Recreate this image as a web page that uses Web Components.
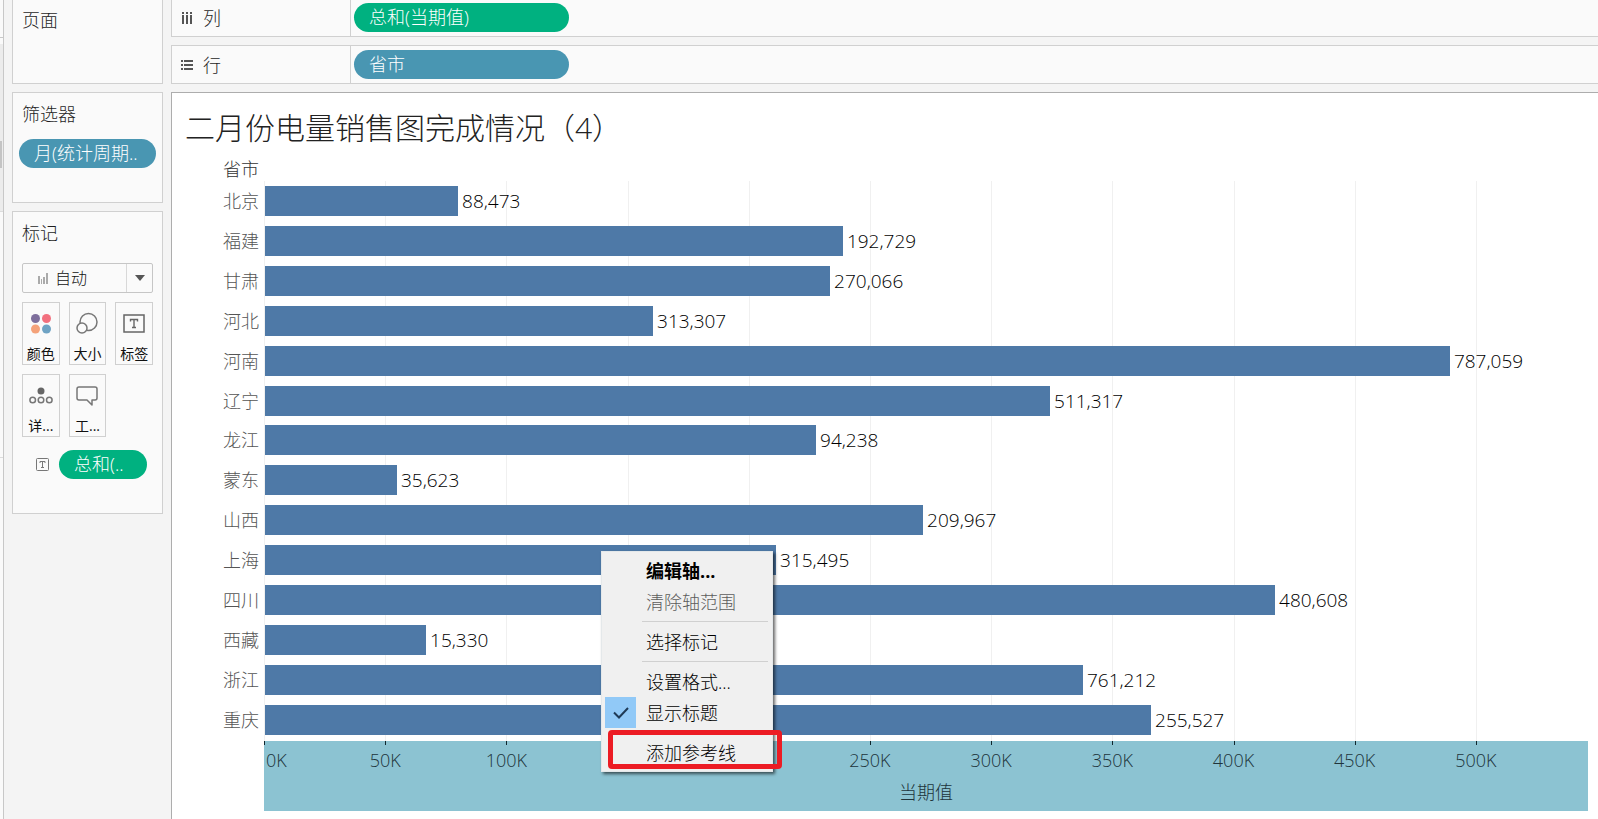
<!DOCTYPE html>
<html lang="zh-CN">
<head>
<meta charset="utf-8">
<title>二月份电量销售图完成情况</title>
<style>
  html, body { margin: 0; min-height: 100%; }
  body {
    background: #f4f4f4;
    color: #1e1e1e;
    font-family: "Open Sans", "Noto Sans CJK SC", sans-serif;
    overflow: hidden;
  }
</style>
</head>
<body>
<viz-workbook></viz-workbook>

<script>
const define = (name, html, setup) => {
  const template = document.createElement('template');
  template.innerHTML = html;
  customElements.define(name, class extends HTMLElement {
    connectedCallback() {
      if (this.shadowRoot) return;
      const root = this.attachShadow({ mode: 'open' });
      root.append(template.content.cloneNode(true));
      if (setup) setup(root, this);
    }
  });
};

/* Edge of the data pane */
define('pane-edge', `
  <style>
    :host { display: flex; flex-direction: column; width: 3px; border-right: 1px solid #c8c8c8; background: #fafafa; }
    div { flex: none; box-sizing: border-box; }
    .head { height: 38px; border-bottom: 1px solid #c8c8c8; }
    .list { height: 167px; margin-top: 6px; padding-top: 97px; background: #ececec; }
    .thumb { height: 27px; width: 2px; background: #c4c4c4; }
    .fields { height: 247px; border-top: 1px solid #dcdcdc; border-bottom: 1px solid #dcdcdc; }
  </style>
  <div class="head"></div>
  <div class="list"><div class="thumb"></div></div>
  <div class="fields"></div>
`);

/* Rounded field pill */
define('field-pill', `
  <style>
    :host { display: block; }
    button {
      display: block; width: 100%; height: 29px; box-sizing: border-box; margin: 0; padding: 0 15px 1px;
      border: 0; border-radius: 15px; background: #4996b2; color: #fff;
      font: 300 18px/26px "Open Sans", "Noto Sans CJK SC", sans-serif;
      text-align: left; white-space: nowrap;
    }
    :host([kind="measure"]) button { background: #00b180; }
  </style>
  <button type="button"><slot></slot></button>
`);

/* Titled card in the side column */
define('side-card', `
  <style>
    :host { display: block; box-sizing: border-box; border: 1px solid #d0d0d0; background: #fafafa; padding: 0 9px; }
    :host([flush]) { border-top: 0; }
    h2 { margin: 0; padding-top: 8px; font-size: 18px; line-height: 26px; font-weight: 300; }
    :host([flush]) h2 { padding-top: 7px; }
  </style>
  <h2><slot name="title"></slot></h2>
  <slot></slot>
`);

/* Rows / columns shelf */
define('field-shelf', `
  <style>
    :host { display: flex; box-sizing: border-box; border: 1px solid #d0d0d0; border-right: 0; background: #fafafa; height: 39px; }
    :host([flush]) { border-top: 0; height: 37px; }
    .name { display: flex; align-items: center; gap: 10px; box-sizing: border-box; width: 179px; padding-left: 9px;
      border-right: 1px solid #d0d0d0; font-size: 18px; line-height: 26px; font-weight: 300; }
    .fields { display: flex; align-items: flex-start; padding: 4px 0 0 3px; }
    :host([flush]) .name { padding-bottom: 1px; }
    :host([flush]) .fields { padding-top: 3px; }
    ::slotted(field-pill) { width: 215px; }
    ::slotted(svg) { display: block; }
  </style>
  <div class="name"><slot name="icon"></slot><slot name="title"></slot></div>
  <div class="fields"><slot></slot></div>
`);

/* Mark property button: icon over caption */
define('mark-button', `
  <style>
    :host { display: block; }
    button {
      display: flex; flex-direction: column; align-items: center; box-sizing: border-box; width: 100%; height: 63px;
      margin: 0; padding: 7px 0 0; border: 1px solid #d0d0d0; background: #fafafa; color: #111;
      font: 400 14px/20px "Open Sans", "Noto Sans CJK SC", sans-serif; white-space: nowrap;
    }
    .icon { height: 34px; }
  </style>
  <button type="button"><span class="icon"><slot name="icon"></slot></span><span><slot></slot></span></button>
`);

/* Mark type drop-down */
define('mark-type', `
  <style>
    :host { display: grid; grid-template-columns: minmax(0, 1fr); margin-top: 17px; }
    :host > * { grid-area: 1 / 1; }
    select {
      appearance: none; box-sizing: border-box; width: 100%; height: 30px; margin: 0 0 1px; padding: 0 32px 0 32px;
      border: 1px solid #c6c6c6; border-radius: 2px; background: #fafafa; color: #111;
      font: 300 16px/28px "Open Sans", "Noto Sans CJK SC", sans-serif;
    }
    .deco { display: flex; align-items: center; justify-content: space-between; pointer-events: none; padding-left: 16px; margin-bottom: 1px; }
    .arrow { display: flex; align-items: center; justify-content: center; align-self: stretch; width: 26px; border-left: 1px solid #d8d8d8; margin: 1px 0; }
  </style>
  <select aria-label="标记类型"><option>自动</option></select>
  <div class="deco">
    <svg width="10" height="11" viewBox="0 0 10 11" fill="#aaa"><path d="M0 3h2v8H0zM3 6h1v5H3zM5 4h2v7H5zM8 0h2v11H8z"/></svg>
    <span class="arrow"><svg width="10" height="6" viewBox="0 0 10 6"><path d="M0 0h10L5 6z" fill="#555"/></svg></span>
  </div>
`);

/* Context menu */
define('menu-item', `
  <style>
    :host { display: block; position: relative; }
    button {
      display: flex; align-items: center; box-sizing: border-box; width: 100%; height: 31px; margin: 0; padding: 0;
      border: 0; background: transparent; color: #000; text-align: left; white-space: nowrap;
      font: 300 18px/26px "Open Sans", "Noto Sans CJK SC", sans-serif;
    }
    :host([strong]) button { font-weight: 700; }
    :host([off]) button { color: #5d5d5d; }
    .check { display: flex; align-items: center; justify-content: center; width: 31px; height: 31px; margin-right: 10px; }
    .check svg { visibility: hidden; }
    :host([checked]) .check { background: #91c9f7; }
    :host([checked]) .check svg { visibility: visible; }
    :host([marked])::after {
      content: ""; position: absolute; inset: -7px -13px -1px 3px; border: 5px solid #ec1c24; border-radius: 4px; pointer-events: none;
    }
  </style>
  <button type="button"><span class="check"><svg width="16" height="12" viewBox="0 0 16 12"><path d="M1 5.500L6 10.500L15 1" fill="none" stroke="#1f3a56" stroke-width="2"/></svg></span><span><slot></slot></span></button>
`, (root, host) => { root.querySelector('button').disabled = host.hasAttribute('off'); });

define('axis-menu', `
  <style>
    :host { display: block; box-sizing: border-box; width: 172px; padding: 3px; border: 1px solid #e4e8ea;
      background: #f0f0f0; box-shadow: 2px 2px 3px rgba(0, 0, 0, .6); }
    hr { height: 1px; margin: 4px 1px 4px 37px; border: 0; background: #d0d0d0; }
  </style>
  <menu-item strong>编辑轴...</menu-item>
  <menu-item off>清除轴范围</menu-item>
  <hr>
  <menu-item>选择标记</menu-item>
  <hr>
  <menu-item>设置格式...</menu-item>
  <menu-item checked>显示标题</menu-item>
  <hr>
  <menu-item marked>添加参考线</menu-item>
`);

/* One bar of the chart: "extent" is its length on the axis, in thousands */
define('chart-bar', `
  <style>
    :host { display: flex; flex: 1 1 30px; align-items: center; min-height: 30px; }
    .name { flex: none; box-sizing: border-box; width: 92px; padding-right: 5px; text-align: right;
      font-size: 18px; line-height: 26px; font-weight: 300; color: #555; }
    .track { display: flex; flex: 1; align-items: center; min-width: 0; padding-left: 1px; }
    .bar { flex: none; height: 30px; background: #4e79a7; }
    .value { margin-left: 4px; font-size: 19px; line-height: 26px; font-weight: 300; color: #000; }
  </style>
  <div class="name"></div>
  <div class="track"><div class="bar"></div><div class="value"></div></div>
`, (root, host) => {
  root.querySelector('.name').textContent = host.getAttribute('name');
  root.querySelector('.value').textContent = host.getAttribute('value');
  root.querySelector('.bar').style.width = host.getAttribute('extent') / 546.2 * 100 + '%';
});

define('bar-chart', `
  <style>
    :host { display: flex; flex-direction: column; flex: 1; --step: calc(100% * 50 / 546.2); }
    .plot { display: grid; flex: 1; grid-template-columns: minmax(0, 1fr); margin-top: 6px; }
    .plot > * { grid-area: 1 / 1; }
    .lines { display: flex; margin-left: 92px; }
    .lines i { flex: none; box-sizing: border-box; width: var(--step); border-left: 1px solid #f0f0f0; }
    .lines i:last-child { flex: 1; }
    .bars { display: flex; flex-direction: column; padding-bottom: 1px; }
    .head { width: 92px; box-sizing: border-box; padding-right: 5px; text-align: right; font-size: 18px; line-height: 12px; font-weight: 300; color: #333; }
    .axis { height: 70px; margin-left: 92px; background: #8cc3d2; color: #20343b; font-weight: 300; overflow: hidden; }
    .ticks, .labels { display: flex; }
    .ticks i { flex: none; box-sizing: border-box; width: var(--step); height: 4px; border-left: 1px solid #10262d; }
    .ticks i:last-child { flex: 1; }
    .labels span { flex: none; width: var(--step); text-align: center; font-size: 18px; line-height: 30px; }
    .labels span:first-child { width: calc(var(--step) / 2); box-sizing: border-box; padding-left: 2px; text-align: left; }
    .caption { text-align: center; font-size: 18px; line-height: 34px; }
  </style>
  <div class="head">省市</div>
  <div class="plot"><div class="lines"></div><div class="bars"></div></div>
  <div class="axis">
    <div class="ticks"></div>
    <div class="labels"></div>
    <div class="caption">当期值</div>
  </div>
`, root => {
  const rows = [
    ['北京', '88,473', 79.7], ['福建', '192,729', 238.6], ['甘肃', '270,066', 233.3],
    ['河北', '313,307', 160.2], ['河南', '787,059', 489.2], ['辽宁', '511,317', 324.1],
    ['龙江', '94,238', 227.5], ['蒙东', '35,623', 54.5], ['山西', '209,967', 271.7],
    ['上海', '315,495', 211], ['四川', '480,608', 417], ['西藏', '15,330', 66.5],
    ['浙江', '761,212', 337.7], ['重庆', '255,527', 365.8]
  ];
  root.querySelector('.bars').innerHTML = rows.map(([n, v, e]) =>
    `<chart-bar name="${n}" value="${v}" extent="${e}"></chart-bar>`).join('');
  const stops = Array.from({ length: 11 }, (_, i) => i * 50);
  const marks = stops.map(() => '<i></i>').join('');
  root.querySelector('.lines').innerHTML = marks;
  root.querySelector('.ticks').innerHTML = marks;
  /* labels that lie under the open menu are not painted; their cells keep the spacing */
  const covered = [150, 200];
  root.querySelector('.labels').innerHTML = stops.map(s =>
    covered.includes(s) ? '<span></span>' : `<span>${s}K</span>`).join('');
});

define('viz-sheet', `
  <style>
    :host { display: flex; flex-direction: column; flex: 1; position: relative; box-sizing: border-box;
      border: 1px solid #adadad; border-width: 1px 0 0 1px; background: #fff; padding: 0 10px 8px 0; }
    h1 { margin: 0; padding-left: 13px; font-size: 30px; line-height: 70px; font-weight: 300; color: #222; }
    axis-menu { position: absolute; left: 429px; top: 458px; }
  </style>
  <h1>二月份电量销售图完成情况（4）</h1>
  <bar-chart></bar-chart>
  <axis-menu></axis-menu>
`);

define('viz-workbook', `
  <style>
    :host { display: flex; min-height: 100vh; }
    aside { display: flex; flex-direction: column; gap: 8px; flex: none; width: 151px; margin: 0 8px; }
    main { display: flex; flex-direction: column; gap: 8px; flex: 1; min-width: 0; }
    .pages { height: 84px; }
    .filters { height: 111px; }
    .marks { height: 303px; }
    .filters field-pill { margin: 12px -3px 0; }
    .props { display: grid; grid-template-columns: repeat(3, minmax(0, 1fr)); gap: 9px; margin-top: 8px; }
    .encoding { display: flex; align-items: center; gap: 10px; margin-top: 13px; padding-left: 14px; }
    .encoding field-pill { width: 88px; }
    svg { display: block; }
  </style>
  <pane-edge></pane-edge>
  <aside>
    <side-card class="pages" flush><span slot="title">页面</span></side-card>
    <side-card class="filters"><span slot="title">筛选器</span><field-pill>月(统计周期..</field-pill></side-card>
    <side-card class="marks">
      <span slot="title">标记</span>
      <mark-type></mark-type>
      <div class="props">
        <mark-button>
          <svg slot="icon" width="22" height="26" viewBox="0 0 22 26"><circle cx="5.500" cy="8.500" r="4.500" fill="#7e6f9c"/><circle cx="16.500" cy="8.500" r="4.500" fill="#f2707e"/><circle cx="5.500" cy="19" r="4.500" fill="#f4a27a"/><circle cx="16.500" cy="19" r="4.500" fill="#6fa3c4"/></svg>颜色</mark-button>
        <mark-button>
          <svg slot="icon" width="22" height="26" viewBox="0 0 22 26" fill="#fafafa" stroke="#777" stroke-width="1.500"><circle cx="12.500" cy="12" r="8.500"/><circle cx="6" cy="18" r="5"/></svg>大小</mark-button>
        <mark-button>
          <svg slot="icon" width="22" height="26" viewBox="0 0 22 26" fill="none" stroke="#666" stroke-width="1.500"><rect x="1" y="5" width="20" height="17"/><path d="M7.500 11.500V9.500h7v2M11 9.500v8M9 17.500h4" stroke-width="1.400"/></svg>标签</mark-button>
        <mark-button>
          <svg slot="icon" width="24" height="26" viewBox="0 0 24 26" fill="none" stroke="#777" stroke-width="1.500"><circle cx="12" cy="9" r="3.500" fill="#666" stroke="none"/><circle cx="3.700" cy="18" r="2.800"/><circle cx="12" cy="18" r="2.800"/><circle cx="20.300" cy="18" r="2.800"/></svg>详...</mark-button>
        <mark-button>
          <svg slot="icon" width="22" height="26" viewBox="0 0 22 26" fill="none" stroke="#777" stroke-width="1.500" stroke-linejoin="round"><path d="M3 5h16q2 0 2 2v9q0 2-2 2h-3v5l-5-5H3q-2 0-2-2V7q0-2 2-2z"/></svg>工...</mark-button>
      </div>
      <div class="encoding">
        <svg width="13" height="13" viewBox="0 0 13 13" fill="none" stroke="#777"><rect x=".5" y=".5" width="12" height="12" rx="1"/><path d="M4 5V3.500h5V5M6.500 3.500v6M5 9.500h3"/></svg>
        <field-pill kind="measure">总和(..</field-pill>
      </div>
    </side-card>
  </aside>
  <main>
    <field-shelf flush>
      <svg slot="icon" width="12" height="12" viewBox="0 0 12 12" fill="#555"><path d="M1 0h2v2H1zM5 0h2v2H5zM9 0h2v2H9zM1 3h2v9H1zM5 3h2v9H5zM9 3h2v9H9z"/></svg>
      <span slot="title">列</span>
      <field-pill kind="measure">总和(当期值)</field-pill>
    </field-shelf>
    <field-shelf>
      <svg slot="icon" width="12" height="12" viewBox="0 0 12 12" fill="#555"><path d="M0 1h2v2H0zM0 5h2v2H0zM0 9h2v2H0zM3 1h9v2H3zM3 5h9v2H3zM3 9h9v2H3z"/></svg>
      <span slot="title">行</span>
      <field-pill>省市</field-pill>
    </field-shelf>
    <viz-sheet></viz-sheet>
  </main>
`);
</script>
</body>
</html>
